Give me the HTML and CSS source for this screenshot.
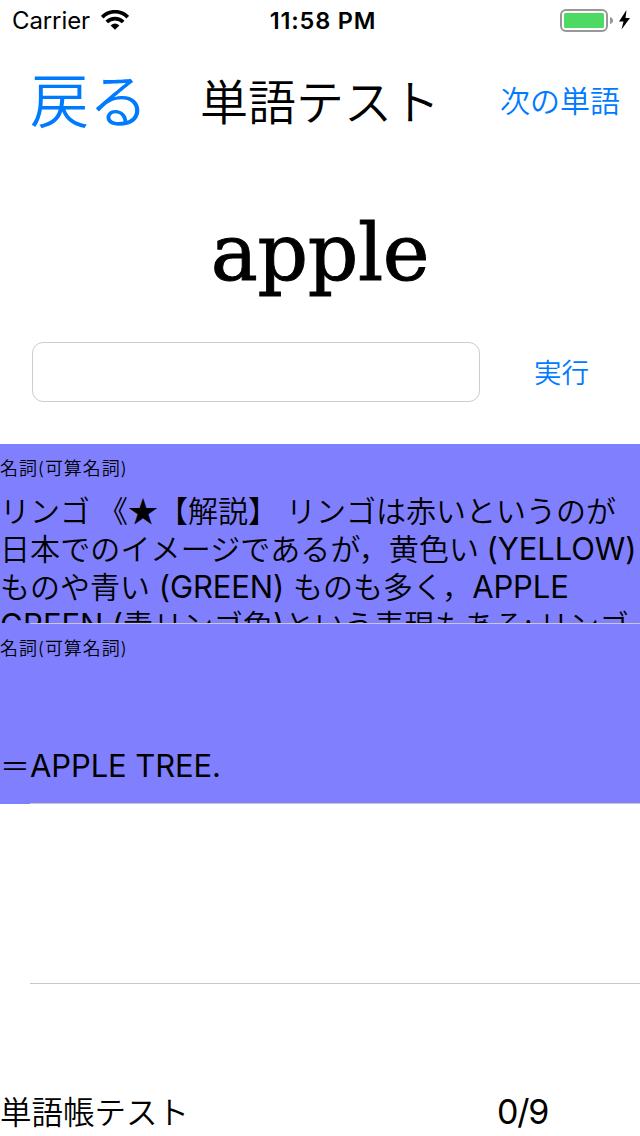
FILE: index.html
```html
<!DOCTYPE html>
<html lang="ja">
<head>
<meta charset="utf-8">
<title>単語テスト</title>
<link rel="stylesheet" href="styles.css">
</head>
<body>
<div class="screen">
  <div class="status">
    <div class="carrier"><span>Carrier</span>
      <svg class="wifi" width="28" height="20" viewBox="0 0 28 20"><g fill="none" stroke="#000" stroke-width="3.700"><path d="M1.2 7.1C8.4-.1 19.6-.1 26.8 7.1"/><path d="M5.8 12C10.3 7.500 17.7 7.500 22.2 12"/></g><path d="M14 19.8L9.6 15.4Q14 11.6 18.4 15.4Z"/></svg>
    </div>
    <span class="clock">11:58 PM</span>
    <svg class="battery" width="72" height="24" viewBox="0 0 72 24"><rect x="1" y="2" width="46" height="21" rx="5" fill="none" stroke="#979797" stroke-width="2"/><rect x="4" y="5" width="40" height="15" rx="1.5" fill="#4cd964"/><path d="M50 9Q53 10 53 12.500T50 16Z" fill="#979797"/><path d="M66.500 2L59 13.500H63.500L61.500 21.500L70 10H65.500Z"/></svg>
  </div>
  <header class="nav">
    <a class="back">戻る</a>
    <h1 class="title">単語テスト</h1>
    <a class="next">次の単語</a>
  </header>
  <div class="word">apple</div>
  <div class="answer"><input class="field" type="text"><a class="run">実行</a></div>
  <main class="list">
    <section class="cell filled">
      <div class="content">
        <div class="kind">名詞(可算名詞)</div>
        <div class="meaning">
          <div class="line l1">リンゴ 《★【解説】 リンゴは赤いというのが</div>
          <div class="line l2">日本でのイメージであるが，黄色い <span class="latin">(YELLOW)</span></div>
          <div class="line l3">ものや青い <span class="latin">(GREEN)</span> ものも多く，<span class="latin">APPLE</span></div>
          <div class="line l4"><span class="latin">GREEN (</span>青リンゴ色<span class="latin">)</span>という表現もある; リンゴ</div>
        </div>
      </div>
      <div class="rule"></div>
    </section>
    <section class="cell filled">
      <div class="content">
        <div class="kind">名詞(可算名詞)</div>
        <div class="meaning single"><div class="line">＝<span class="latin">APPLE TREE.</span></div></div>
      </div>
      <div class="rule"></div>
    </section>
    <section class="cell"><div class="content"></div><div class="rule"></div></section>
  </main>
  <footer class="footer"><span class="book">単語帳テスト</span><span class="count">0/9</span></footer>
</div>
</body>
</html>
```
FILE: styles.css
```css
* { box-sizing: border-box; }
body { margin: 0; background: #fff; color: #000; font-family: Inter, "Noto Sans CJK JP", sans-serif; font-weight: 350; }
.screen { width: 640px; height: 1136px; overflow: hidden; display: flex; flex-direction: column; white-space: nowrap; }
.status { height: 40px; display: grid; grid-template-columns: 1fr auto 1fr; padding: 0 8px 0 12px; align-items: center; font-size: 24px; font-weight: 400; }
.carrier { display: flex; align-items: center; gap: 11px; letter-spacing: -.1px; }
.clock { font-weight: 600; font-size: 23.500px; letter-spacing: .8px; padding-left: 2px; }
.battery { justify-self: end; }
.nav { height: 124px; display: flex; align-items: center; padding: 0 20px 6px 30px; font-family: "Noto Sans CJK JP", sans-serif; }
.back { font-size: 59px; line-height: 80px; width: 170px; padding-bottom: 2px; color: #007aff; }
.title { margin: 0; font-size: 48px; font-weight: 350; line-height: 70px; flex: 1; }
.next, .run { color: #007aff; font-size: 30px; }
.word { height: 178px; font: 79px/178px "DejaVu Serif", serif; text-align: center; letter-spacing: -.4px; -webkit-text-stroke: 1px #000; stroke-linejoin: round; }
.answer { height: 102px; display: flex; padding-left: 32px; }
.field { width: 448px; height: 60px; border: 1px solid #ccc; border-radius: 11px; background: #fff; }
.run { font-size: 27.500px; line-height: 62px; margin-left: 54px; }
.list { height: 540px; }
.cell { height: 180px; display: flex; flex-direction: column; }
.content { height: 179px; overflow: hidden; }
.rule { height: 1px; margin-left: 30px; background: #c8c7cc; }
.filled { background: #8080ff; }
.kind { height: 46px; padding-top: 11px; font-size: 18px; line-height: 28px; letter-spacing: .9px; }
.meaning { font-family: "Noto Sans CJK JP", sans-serif; font-size: 30px; line-height: 38px; }
.line { height: 38px; }
.l1 { word-spacing: 1.300px; }
.l2 { letter-spacing: .12px; word-spacing: .5px; }
.l3 { word-spacing: 2px; }
.latin { font: 400 31px/38px Inter, sans-serif; letter-spacing: -.1px; }
.single { padding-top: 75px; }
.footer { height: 152px; display: flex; align-items: flex-end; padding-bottom: 3px; line-height: 42px; }
.book { width: 497px; font-size: 31.500px; line-height: 40px; }
.count { font-size: 34px; font-weight: 400; letter-spacing: -1.200px; }
```
